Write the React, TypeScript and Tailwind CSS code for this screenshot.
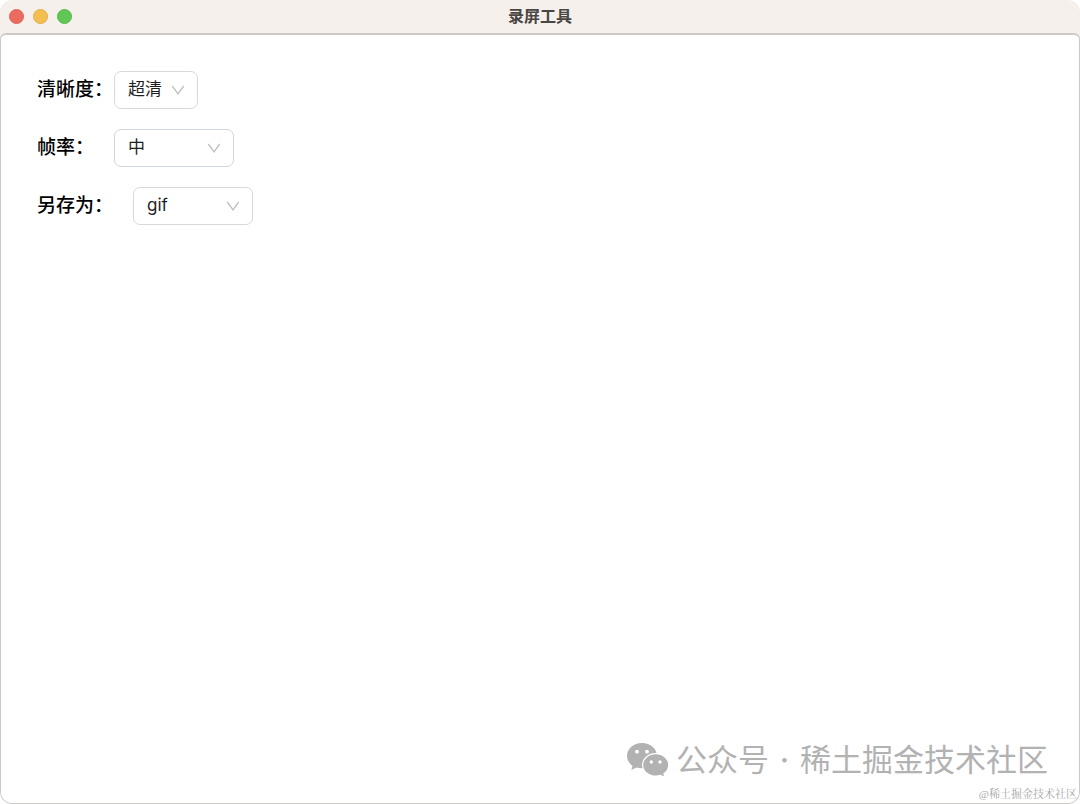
import { useState } from 'react';
import clsx from 'clsx';

type Option = { value: string; label: string };

const clarityOptions: Option[] = [
  { value: 'super', label: '超清' },
  { value: 'high', label: '高清' },
  { value: 'normal', label: '标清' },
];

const frameOptions: Option[] = [
  { value: 'high', label: '高' },
  { value: 'middle', label: '中' },
  { value: 'low', label: '低' },
];

const formatOptions: Option[] = [
  { value: 'gif', label: 'gif' },
  { value: 'mp4', label: 'mp4' },
  { value: 'webm', label: 'webm' },
];

interface FieldProps {
  id: string;
  label: string;
  value: string;
  options: Option[];
  onChange: (value: string) => void;
  className?: string;
  selectClassName?: string;
}

function Field({ id, label, value, options, onChange, className, selectClassName }: FieldProps) {
  return (
    <div className={clsx('flex items-center', className)}>
      <label htmlFor={id} className="text-[19px] font-medium leading-9 text-black">{label}</label>
      <div className="relative">
        <select
          id={id}
          value={value}
          onChange={e => onChange(e.target.value)}
          className={clsx(
            'block h-[38px] appearance-none rounded-[7px] border bg-white pl-[13px] pr-8 text-[17px] text-[#1f1f1f] outline-none',
            selectClassName,
          )}
        >
          {options.map(o => (
            <option key={o.value} value={o.value}>{o.label}</option>
          ))}
        </select>
        <svg
          viewBox="0 0 14 14"
          className="pointer-events-none absolute right-[13px] top-3 size-[14px]"
          fill="none"
          stroke="#bfbfbf"
          strokeWidth="1.3"
          aria-hidden="true"
        >
          <path d="M1.3 3 7 10.8 12.7 3" />
        </svg>
      </div>
    </div>
  );
}

function WechatIcon() {
  return (
    <svg viewBox="0 0 44 36" className="h-9 w-11" aria-hidden="true">
      <path
        fill="#b2b2b2"
        d="M16 1C7.4 1 1 6.7 1 14c0 4 2.1 7.5 5.5 9.9L5.3 28l5.2-2.6c1.7.5 3.5.8 5.5.8 8.6 0 15-5.4 15-12.2C31 6.7 24.6 1 16 1Z"
      />
      <path
        fill="#b2b2b2"
        stroke="#fff"
        strokeWidth="1.2"
        d="M29.8 11.7c-7.3 0-13.2 4.9-13.2 11.2s5.900 11.2 13.2 11.2c1.6 0 3.2-.3 4.6-.7l4.7 2.2-1.2-3.9c3-2.1 4.9-5.3 4.9-8.800 0-6.300-5.800-11.200-13-11.200Z"
      />
      <g fill="#fff">
        <circle cx="11" cy="9.7" r="1.9" />
        <circle cx="21" cy="9.7" r="1.9" />
        <circle cx="25.3" cy="20" r="1.7" />
        <circle cx="34" cy="20" r="1.7" />
      </g>
    </svg>
  );
}

export default function App() {
  const [clarity, setClarity] = useState('super');
  const [frame, setFrame] = useState('middle');
  const [format, setFormat] = useState('gif');

  return (
    <div className="relative flex min-h-screen flex-col overflow-hidden rounded-[12px] bg-[#f5f0ec] [font-family:Inter,'Noto_Sans_CJK_SC',sans-serif]">
      {/* 标题栏 */}
      <header className="grid h-[33px] grid-cols-[1fr_auto_1fr] items-center">
        <div className="flex gap-[9px] pl-[9px]">
          <button type="button" aria-label="关闭" className="size-[15px] rounded-full border border-[#dc6259] bg-[#ec6b5f]" />
          <button type="button" aria-label="最小化" className="size-[15px] rounded-full border border-[#e0ae49] bg-[#f4bf50]" />
          <button type="button" aria-label="缩放" className="size-[15px] rounded-full border border-[#57b74b] bg-[#61c654]" />
        </div>
        <h1 className="pb-0.5 text-[16px] font-bold leading-6 text-[#4a4644]">录屏工具</h1>
      </header>

      <main className="flex flex-1 flex-col gap-5 rounded-t-[6px] rounded-b-[12px] border border-t-2 border-[#cbc9c8] bg-white px-9 pt-9">
        <Field
          id="clarity"
          label="清晰度："
          value={clarity}
          options={clarityOptions}
          onChange={setClarity}
          className="gap-px"
          selectClassName="w-[84px] border-[#d9d9d9]"
        />
        <Field
          id="frame"
          label="帧率："
          value={frame}
          options={frameOptions}
          onChange={setFrame}
          className="gap-5"
          selectClassName="w-[120px] border-[#d0d5e0]"
        />
        <Field
          id="format"
          label="另存为："
          value={format}
          options={formatOptions}
          onChange={setFormat}
          className="gap-5"
          selectClassName="w-[120px] border-[#d9d9d9]"
        />
      </main>

      {/* 水印 */}
      <div className="pointer-events-none absolute bottom-[21px] right-8 flex items-center text-[31px] leading-[46px] text-[#b2b2b2]">
        <WechatIcon />
        <span className="ml-1.5">公众号</span>
        <span className="w-[31px] text-center font-medium">·</span>
        <span>稀土掘金技术社区</span>
      </div>
      <div className="pointer-events-none absolute bottom-[2px] right-[3px] text-[11px] leading-4 text-[#a8a8a8] [font-family:'Liberation_Serif','Noto_Serif_CJK_SC','Noto_Sans_CJK_SC',serif]">
        @稀土掘金技术社区
      </div>
    </div>
  );
}
